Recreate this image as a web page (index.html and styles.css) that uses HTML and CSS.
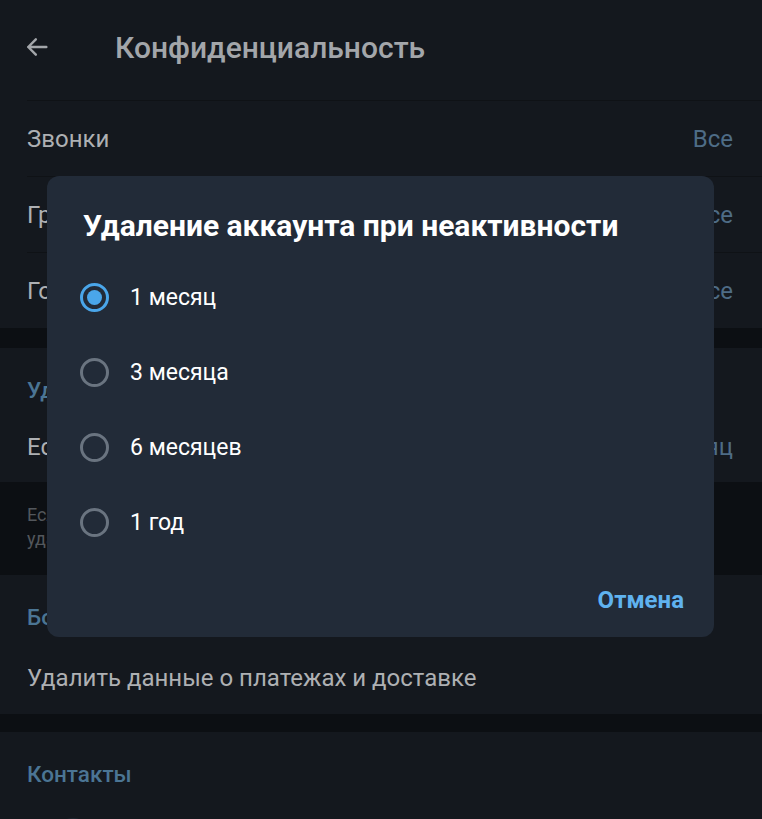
FILE: index.html
```html
<!DOCTYPE html>
<html lang="ru">
<head>
    <meta charset="UTF-8">
    <title>Конфиденциальность</title>
    <link rel="stylesheet" href="styles.css">
</head>
<body>
    <div class="screen">
        <header class="topbar">
            <svg class="back" width="28" height="28" viewBox="0 0 24 24">
                <path d="M20 12H4.5M11 5.5L4.5 12l6.5 6.5" fill="none" stroke="currentColor" stroke-width="2.1" stroke-linecap="round" stroke-linejoin="round"/>
            </svg>
            <h1>Конфиденциальность</h1>
        </header>

        <section class="group">
            <div class="row"><span>Звонки</span><span class="value">Все</span></div>
            <div class="row"><span>Группы и каналы</span><span class="value">Все</span></div>
            <div class="row"><span>Голосовые сообщения</span><span class="value">Все</span></div>
        </section>

        <section class="group spaced">
            <div class="group-title">Удаление аккаунта</div>
            <div class="row short"><span>Если я не захожу</span><span class="value">1 месяц</span></div>
        </section>
        <p class="info">Если Вы ни разу не загрузите Telegram за это время, аккаунт будет<br>удалён вместе со всеми группами, сообщениями и контактами.</p>

        <section class="group">
            <div class="group-title">Боты и сайты</div>
            <div class="row mid"><span>Удалить данные о платежах и доставке</span></div>
        </section>

        <section class="group spaced tight">
            <div class="group-title">Контакты</div>
            <div class="peek"><span class="avatar"></span></div>
        </section>

        <div class="dialog">
            <h2>Удаление аккаунта при неактивности</h2>
            <div class="options">
                <div class="option"><span class="radio checked"></span>1 месяц</div>
                <div class="option"><span class="radio"></span>3 месяца</div>
                <div class="option"><span class="radio"></span>6 месяцев</div>
                <div class="option"><span class="radio"></span>1 год</div>
            </div>
            <div class="actions"><button type="button">Отмена</button></div>
        </div>
    </div>
</body>
</html>
```

FILE: styles.css
```css
body {
    margin: 0;
    background: #0c0f13;
    font-family: Roboto, "Noto Sans", sans-serif;
}
.screen {
    position: relative;
    width: 762px;
    height: 819px;
    overflow: hidden;
}
.topbar {
    height: 100px;
    background: #14181e;
    display: flex;
    align-items: center;
    padding-left: 23px;
}
.back {
    color: #a3a6aa;
    margin-top: -6px;
}
.topbar h1 {
    margin: -6px 0 0 64px;
    font-size: 30px;
    font-weight: 500;
    color: #a3a6aa;
}
.group {
    background: #14181e;
    padding-left: 27px;
}
.group.spaced {
    margin-top: 20px;
}
.group.tight {
    margin-top: 18px;
}
.row {
    height: 75px;
    display: flex;
    align-items: center;
    justify-content: space-between;
    padding-right: 29px;
    border-top: 1px solid #0f1216;
    font-size: 24px;
    color: #aeb0b3;
}
.row.short {
    height: 66px;
    border-top: none;
    padding-bottom: 2px;
}
.row.mid {
    height: 73px;
    border-top: none;
}
.row .value {
    color: #4e6c86;
}
.group-title {
    height: 66px;
    box-sizing: border-box;
    display: flex;
    align-items: flex-end;
    padding-bottom: 12px;
    font-size: 22.5px;
    line-height: 24px;
    font-weight: 500;
    color: #4b7594;
}
.info {
    margin: 0;
    height: 93px;
    box-sizing: border-box;
    padding: 21px 27px 0;
    font-size: 18px;
    line-height: 24px;
    color: #53575c;
}
.peek {
    height: 60px;
    padding-top: 20px;
    padding-left: 26px;
}
.avatar {
    display: block;
    width: 40px;
    height: 40px;
    border-radius: 50%;
    background: #1f262f;
}
.dialog {
    position: absolute;
    left: 47px;
    top: 176px;
    width: 667px;
    height: 461px;
    box-sizing: border-box;
    padding: 34px 30px 0 36px;
    background: #222b38;
    border-radius: 12px;
}
.dialog h2 {
    margin: 0;
    font-size: 30px;
    line-height: 32px;
    font-weight: 700;
    color: #ffffff;
}
.options {
    margin-top: 18px;
}
.option {
    height: 75px;
    display: flex;
    align-items: center;
    margin-left: -3px;
    font-size: 23px;
    color: #ffffff;
}
.radio {
    width: 29px;
    height: 29px;
    box-sizing: border-box;
    border: 3px solid #6a7480;
    border-radius: 50%;
    margin-right: 21px;
    display: flex;
    align-items: center;
    justify-content: center;
}
.radio.checked {
    border-color: #4aa6ea;
}
.radio.checked::after {
    content: "";
    width: 15px;
    height: 15px;
    border-radius: 50%;
    background: #4aa6ea;
}
.actions {
    display: flex;
    justify-content: flex-end;
    margin-top: 28px;
}
.actions button {
    background: transparent;
    border: none;
    padding: 0;
    font-family: inherit;
    font-size: 24px;
    line-height: 24px;
    font-weight: 700;
    color: #5fb2ef;
    cursor: pointer;
}
```
